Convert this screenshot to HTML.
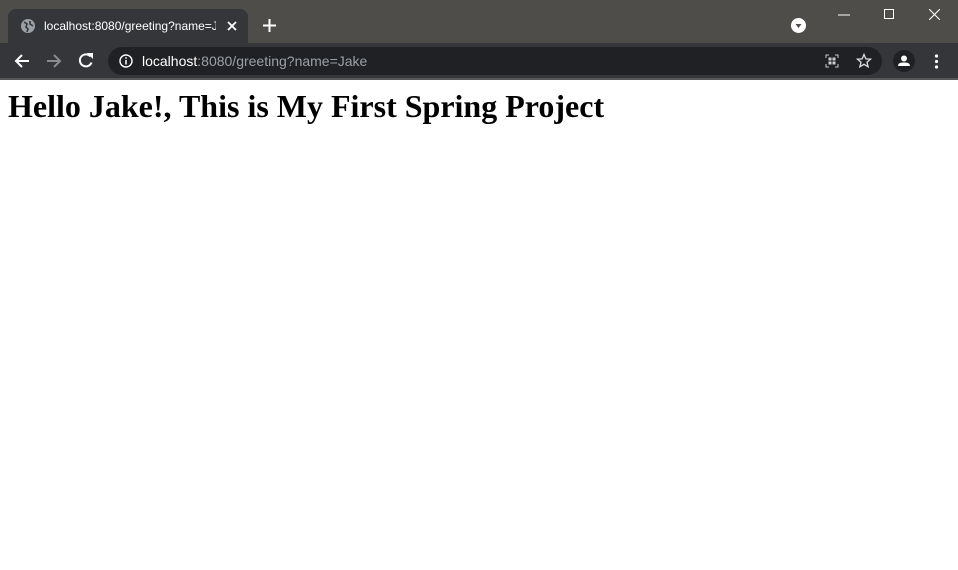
<!DOCTYPE html>
<html><head><style>
*{box-sizing:border-box}
html,body{margin:0;padding:0;width:958px;height:570px;overflow:hidden;background:#fff}
#chrome{position:relative;height:80px;background:#4f4d4a;font-family:"Liberation Sans",sans-serif}
#tab{position:absolute;left:8px;top:9px;width:240px;height:34px;background:#35363a;border-radius:8px 8px 0 0}
#tab .t{position:absolute;left:36px;top:10px;font-size:12px;color:#fff;white-space:nowrap;width:172px;overflow:hidden}
#bar{position:absolute;left:0;top:43px;width:958px;height:35px;background:#35363a}
#line{position:absolute;left:0;top:78px;width:958px;height:2px;background:#575757}
#omni{position:absolute;left:108px;top:4px;width:774px;height:28px;background:#202124;border-radius:14px}
#omni .u{position:absolute;left:34px;top:6px;font-size:14px;color:#9aa0a6}
#omni .u b{color:#fff;font-weight:normal}
svg{position:absolute}
h1{margin:8px 8px;font-family:"Liberation Serif",serif;font-size:32px;font-weight:bold;color:#000}
</style></head><body>
<div id="chrome">
<div id="tab">
<svg style="left:13px;top:10px" width="14" height="14" viewBox="0 0 14 14"><circle cx="7" cy="7" r="7" fill="#9aa0a6"/><path d="M3 3 L6 5 L5 8 L7 10 L6 13 M9 2 L9 5 L12 7" stroke="#35363a" stroke-width="1.6" fill="none"/></svg>
<div class="t">localhost:8080/greeting?name=Jake</div>
<svg style="left:219px;top:12px" width="10" height="10"><path d="M1 1L9 9M9 1L1 9" stroke="#fff" stroke-width="1.8"/></svg>
</div>
<svg style="left:263px;top:19px" width="13" height="13"><path d="M6.5 0V13M0 6.5H13" stroke="#fff" stroke-width="2"/></svg>
<svg style="left:791px;top:18px" width="15" height="15"><circle cx="7.5" cy="7.5" r="7.5" fill="#fff"/><path d="M4.5 6H10.5L7.5 10Z" fill="#4f4d4a"/></svg>
<svg style="left:838px;top:14px" width="12" height="2"><path d="M0 1H12" stroke="#fff" stroke-width="1"/></svg>
<svg style="left:884px;top:9px" width="10" height="11"><rect x=".5" y=".5" width="9" height="9" fill="none" stroke="#fff"/></svg>
<svg style="left:929px;top:9px" width="11" height="11"><path d="M0 0L11 11M11 0L0 11" stroke="#fff" stroke-width="1.1"/></svg>
<div id="bar">
<svg style="left:14px;top:10px" width="16" height="16"><path d="M15 8H2M8 2L2 8L8 14" stroke="#fff" stroke-width="2" fill="none"/></svg>
<svg style="left:46px;top:10px" width="16" height="16"><path d="M1 8H14M8 2L14 8L8 14" stroke="#8a8b8d" stroke-width="2" fill="none"/></svg>
<svg style="left:78px;top:9px" width="17" height="17"><path d="M13.5 10.5A6 6 0 1 1 12.5 4.5" stroke="#fff" stroke-width="2" fill="none"/><path d="M9 1H15V7Z" fill="#fff"/></svg>
<div id="omni">
<svg style="left:11px;top:7px" width="14" height="14"><circle cx="7" cy="7" r="6" fill="none" stroke="#fff" stroke-width="1.4"/><path d="M7 6V10.5" stroke="#fff" stroke-width="1.5"/><circle cx="7" cy="4" r=".9" fill="#fff"/></svg>
<div class="u"><b>localhost</b>:8080/greeting?name=Jake</div>
<svg style="left:717px;top:7px" width="14" height="14"><path d="M1 4V1H4M10 1H13V4M13 10V13H10M4 13H1V10" stroke="#ccc" fill="none"/><rect x="3.5" y="3.5" width="3" height="3" fill="#ccc"/><rect x="7.5" y="3.5" width="3" height="3" fill="#ccc"/><rect x="3.5" y="7.5" width="3" height="3" fill="#ccc"/><rect x="7.5" y="7.5" width="3" height="3" fill="#ccc"/></svg>
<svg style="left:748px;top:6px" width="16" height="16"><path d="M8 1.5L9.9 5.9L14.5 6.2L11 9.2L12.1 13.8L8 11.3L3.9 13.8L5 9.2L1.5 6.2L6.1 5.9Z" fill="none" stroke="#ddd" stroke-width="1.3"/></svg>
</div>
<svg style="left:893px;top:7px" width="22" height="22"><circle cx="11" cy="11" r="11" fill="#202124"/><circle cx="11" cy="8.5" r="3" fill="#fff"/><path d="M5 16Q5 12 11 12.5Q17 12 17 16Z" fill="#fff"/></svg>
<svg style="left:934px;top:11px" width="5" height="15"><circle cx="2.5" cy="2" r="1.6" fill="#fff"/><circle cx="2.5" cy="7.5" r="1.6" fill="#fff"/><circle cx="2.5" cy="13" r="1.6" fill="#fff"/></svg>
</div>
<div id="line"></div>
</div>
<h1>Hello Jake!, This is My First Spring Project</h1>
</body></html>
